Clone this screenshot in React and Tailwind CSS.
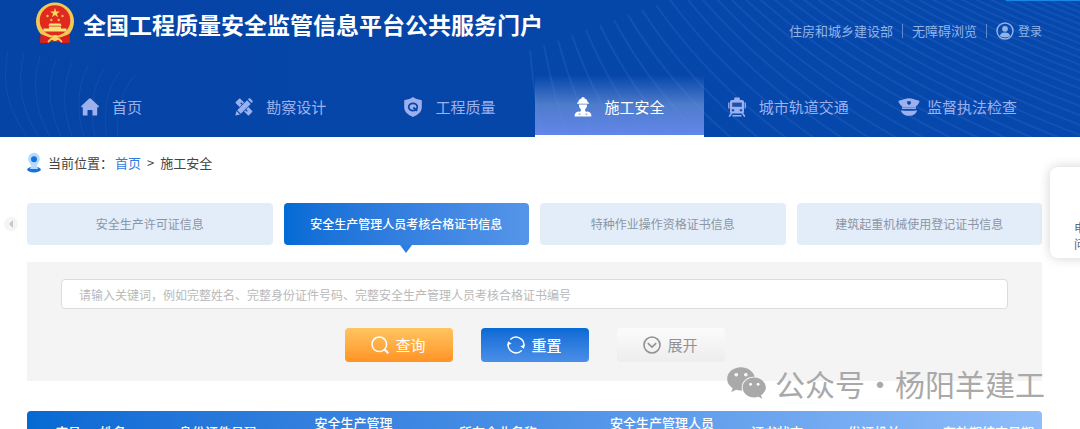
import React, { useState } from 'react';
import { FaWeixin } from 'react-icons/fa';

const navItems = [
  { name: '首页', icon: HomeIcon, gap: 'gap-[13px]' },
  { name: '勘察设计', icon: DesignIcon, gap: 'gap-[13px]' },
  { name: '工程质量', icon: ShieldIcon, gap: 'gap-[13px]' },
  { name: '施工安全', icon: WorkerIcon, gap: 'gap-[13px]' },
  { name: '城市轨道交通', icon: TrainIcon, gap: 'gap-[13px]' },
  { name: '监督执法检查', icon: CapIcon, gap: 'gap-[7px]' },
];

const tabs = [
  '安全生产许可证信息',
  '安全生产管理人员考核合格证书信息',
  '特种作业操作资格证书信息',
  '建筑起重机械使用登记证书信息',
];

const columns = [
  { title: '序号', width: 'w-[57px] pl-[25px]' },
  { title: '姓名', width: 'w-[58px]' },
  { title: '身份证件号码', width: 'w-[152px]' },
  { title: '安全生产管理', more: '人员类型', width: 'w-[119px]' },
  { title: '所在企业名称', width: 'w-[170px]' },
  { title: '安全生产管理人员', more: '考核合格证书编号', width: 'w-[158px]' },
  { title: '证书状态', width: 'w-[72px]' },
  { title: '发证机关', width: 'w-[122px]' },
  { title: '有效期结束日期', width: 'w-[107px]' },
];

function HomeIcon() {
  return (
    <svg viewBox="0 0 18 18" className="w-[18px] h-[18px]" fill="currentColor">
      <path d="M9 .3c.4 0 .7.200 1 .5l7.700 7.300c.5.6.2 1.200-.5 1.200h-1v7.400c0 .6-.3.9-.9.900h-3.800v-5c0-.4-.2-.6-.6-.6H7.100c-.4 0-.6.2-.6.6v5H2.700c-.6 0-.9-.3-.9-.9V9.300h-1C.1 9.300-.2 8.700.3 8.100L8 .8c.3-.3.600-.5 1-.5z" />
    </svg>
  );
}

function DesignIcon() {
  return (
    <svg viewBox="0 0 18 18" className="w-[18px] h-[18px]" fill="currentColor">
      <path d="M.8 4.100 4.100.8c.4-.4.8-.4 1.200 0l3.800 3.800-1.300 1.300-1.600-1.600-.9.900 1.600 1.600L5.600 8.100 4.600 9.100.8 5.300c-.4-.4-.4-.8 0-1.200z" />
      <path d="m9.100 13.400 1.200-1.200 1.600 1.600.9-.9-1.600-1.600 2.200-2.200 3.800 3.800c.4.4.4.8 0 1.200l-3.100 3.100c-.4.4-.8.4-1.200 0z" />
      <path d="m12.100 2.300 3.600 3.600L5.800 15.800l-3.600-3.600zM13 1.400l.8-.8c.5-.5 1-.5 1.500 0l2.100 2.100c.5.5.5 1 0 1.500l-.8.8zM1.500 13l3.500 3.500-4.100 1.100c-.3.100-.6-.2-.5-.5z" />
    </svg>
  );
}

function ShieldIcon() {
  return (
    <svg viewBox="0 0 18 20" className="w-[18px] h-5">
      <path d="M9 0c2.500 1.700 5 2.600 8 2.900.5 0 .8.3.8.8v6.600c0 4.500-3.600 7.500-8.800 9.700C3.800 17.800.2 14.800.2 10.300V3.700c0-.5.3-.8.8-.8C4 2.600 6.500 1.700 9 0z" fill="currentColor" />
      <ellipse cx="9" cy="10" rx="4.300" ry="3.700" fill="none" stroke="#0846a8" strokeWidth="1.800" />
      <path d="m9.300 10.500 3.900 3.200" stroke="#0846a8" strokeWidth="1.800" />
    </svg>
  );
}

function WorkerIcon() {
  return (
    <svg viewBox="0 0 18 20" className="w-[18px] h-5" fill="currentColor">
      <path d="M7.800.3h2.400l.4 1.200C12.600 2.100 13.700 3.700 13.800 5.400h.8c.5 0 .5 1.400 0 1.400H3.400c-.5 0-.5-1.400 0-1.400h.8c.1-1.700 1.200-3.300 3.200-3.900z" />
      <path d="M4.900 7.500h8.200c0 2.200-.7 3.800-2 4.800v1.400l1.200 1.300c.6-.5 1.300-.5 2-.3 2 .6 3.100 2 3.100 4.200 0 .4-.3.700-.7.700H1.300c-.4 0-.7-.3-.7-.7 0-2.200 1.100-3.600 3.100-4.200.7-.2 1.400-.2 2 .3l1.200-1.300v-1.400c-1.300-1-2-2.600-2-4.800z" />
      <path d="M4.600 17.200h2M11.400 17.200h2" stroke="#6d8fdc" strokeWidth="1" />
    </svg>
  );
}

function TrainIcon() {
  return (
    <svg viewBox="0 0 18 20" className="w-[18px] h-5">
      <path d="M7 .5h4c.6 0 .8.3.8.8V3H14c1.200 0 2 .8 2 2v9.500c0 1.200-.8 2-2 2H4c-1.200 0-2-.8-2-2V5c0-1.200.8-2 2-2h2.200V1.300c0-.5.2-.8.8-.8z" fill="currentColor" />
      <path d="M.8 5.500v6M17.200 5.500v6" stroke="currentColor" strokeWidth="1.300" />
      <path d="M4.200 5.600h9.600v4.200H4.200z" fill="#1d4fae" />
      <circle cx="5" cy="13.300" r="1.200" fill="#1d4fae" />
      <circle cx="13" cy="13.300" r="1.200" fill="#1d4fae" />
      <path d="m3.600 16-2.400 3.700M14.400 16l2.400 3.700M4.500 18.800h9" stroke="currentColor" strokeWidth="1.500" />
    </svg>
  );
}

function CapIcon() {
  return (
    <svg viewBox="0 0 22 18" className="w-[22px] h-[18px]" fill="currentColor">
      <path d="M11 .2c3 0 5 1.300 9.500 2.200.9.200 1.200.9.900 1.600-.8 1.900-1.900 3.200-3.500 4.500v2.600H4.100V8.500C2.500 7.200 1.400 5.900.6 4c-.3-.7 0-1.400.9-1.600C6 1.500 8 .2 11 .2z" />
      <path d="M3 12.200c4.600.7 11.400.7 16 0-.6 3.400-3.600 5.600-8 5.600s-7.400-2.200-8-5.600z" />
      <path d="M9.200 3.300h3.600v2.500L11 7 9.200 5.800z" fill="#0846a8" />
      <path d="M4.100 9.200c4 .7 9.800.7 13.800 0" fill="none" stroke="#5878c8" strokeWidth=".7" />
    </svg>
  );
}

function Emblem() {
  return (
    <svg viewBox="0 0 40 42" className="w-10 h-[42px]" role="img" aria-label="国徽">
      <path d="M6 29h28l1 11.500c-5 1.300-9 .3-11-1h-8c-2 1.300-6 2.300-11 1z" fill="#d8201c" />
      <circle cx="20" cy="19.500" r="19" fill="#f0ca55" />
      <circle cx="20" cy="18.500" r="15.300" fill="#e02a20" />
      <path d="m20 6 1.200 3.500h3.700l-3 2.200 1.200 3.500-3.100-2.200-3.100 2.200 1.200-3.500-3-2.200h3.700z" fill="#f8d85c" />
      <g fill="#f3bd4a">
        <circle cx="12.500" cy="14" r="1.200" />
        <circle cx="27.500" cy="14" r="1.200" />
        <circle cx="16.300" cy="18" r="1.200" />
        <circle cx="23.700" cy="18" r="1.200" />
      </g>
      <path d="M14.500 21.500h11l1.200 2.300H13.300zM14 24.500h12v2h5.500v3h-23v-3H14z" fill="#fbe27a" />
      <path d="M6 32c6 4 22 4 28 0l1 8.500c-5 1.300-9 .3-11-1h-8c-2 1.300-6 2.300-11 1z" fill="#d8201c" />
      <path d="M9 31.500c5 4.500 17 4.500 22 0M13 40l3-3h8l3 3" fill="none" stroke="#f0ca55" strokeWidth="1.800" />
      <circle cx="20" cy="36" r="3" fill="#f5d565" />
    </svg>
  );
}

// faint contour lines over the blue banner
function Waves() {
  const right = Array.from({ length: 44 }, (_, i) => {
    const x = 530 + i * 14;
    const y = Math.max(-6, 50 - i * 5);
    const dx = 14 + i * 15;
    const dy = 150 - y;
    return `M${x} ${y} Q${x + dx * 0.4} ${y + dy * 0.58} ${x + dx} ${y + dy}`;
  });
  const left = Array.from({ length: 9 }, (_, i) => `M${8 + i * 16} ${50 + i * 3} C${i * 15} 90 ${12 + i * 13} 115 ${30 + i * 11} 140`);
  return (
    <svg viewBox="0 0 1080 136" preserveAspectRatio="none" className="absolute inset-0 w-full h-full" fill="none" stroke="#5b93e8">
      {right.map((d) => (
        <path key={d} d={d} strokeWidth="2" strokeOpacity="0.14" />
      ))}
      {left.map((d) => (
        <path key={d} d={d} strokeOpacity="0.13" />
      ))}
    </svg>
  );
}

const App = () => {
  const [activeNav, setActiveNav] = useState('施工安全');
  const [activeTab, setActiveTab] = useState(tabs[1]);
  const [keyword, setKeyword] = useState('');

  return (
    <div className="relative h-screen overflow-hidden bg-white font-['Noto_Sans_CJK_SC',sans-serif] text-[#444]">
      <header className="relative bg-linear-to-r from-[#0544a5] to-[#0648ad] pl-[27px] pr-[38px]">
        <Waves />
        <div className="absolute top-0 right-0 h-px w-[74px] bg-[#1687ea]" />
        <div className="relative flex h-[75px] items-start justify-between">
          <div className="flex items-start gap-2 pl-2">
            <span className="pt-[2px]">
              <Emblem />
            </span>
            <h1 className="text-[23px] leading-[48px] font-bold text-white">全国工程质量安全监管信息平台公共服务门户</h1>
          </div>
          <div className="flex items-center pt-[21px] text-[13px] leading-5 text-[#91b3e6]">
            <a href="#mohurd">住房和城乡建设部</a>
            <span className="mx-[9px] h-[14px] w-px bg-[#5d88cb]" />
            <a href="#accessible">无障碍浏览</a>
            <span className="mx-[9px] h-[14px] w-px bg-[#5d88cb]" />
            <a href="#login" className="flex items-center gap-1 text-xs leading-5">
              <svg viewBox="0 0 18 18" className="w-[18px] h-[18px]">
                <circle cx="9" cy="9" r="8" fill="none" stroke="currentColor" strokeWidth="1.500" />
                <circle cx="9" cy="6.800" r="2.900" fill="currentColor" />
                <path d="M3.800 13.800c.6-2.300 2.300-3.400 5.200-3.400s4.600 1.100 5.200 3.400C11.500 16 6.500 16 3.800 13.800z" fill="currentColor" />
              </svg>
              登录
            </a>
          </div>
        </div>
        <nav className="relative grid grid-cols-6">
          {navItems.map((item) => (
            <a
              key={item.name}
              href={`#${item.name}`}
              onClick={() => setActiveNav(item.name)}
              className={`flex h-[62px] items-center justify-center border-b-2 pt-1 text-[15px] ${item.gap} ${
                activeNav === item.name
                  ? 'border-white bg-linear-to-b from-[#6d93da]/0 via-[#6d93da]/70 to-[#6486ea] text-white'
                  : 'border-transparent text-[#9db0ee]'
              }`}
            >
              <item.icon />
              {item.name}
            </a>
          ))}
        </nav>
      </header>

      <main className="pl-[27px] pr-[38px]">
        <div className="flex h-[66px] items-center pb-[14px] text-[13px]">
          <svg viewBox="0 0 14 20" className="mr-[7px] w-[14px] h-5">
            <ellipse cx="7" cy="16.500" rx="6.800" ry="3" fill="#1673d8" />
            <path d="M7 0c3.400 0 5.800 2.600 5.800 5.900 0 3.200-2.300 4.700-2.800 6.900L11 16H3l1-3.200C3.500 10.600 1.200 9.100 1.200 5.900 1.200 2.600 3.600 0 7 0z" fill="#b4daff" />
            <circle cx="7" cy="6.300" r="3" fill="#1673d8" />
          </svg>
          <span>当前位置：</span>
          <a href="#home" className="ml-[2px] text-[#337bd8]">首页</a>
          <span className="mx-[6px]">&gt;</span>
          <span>施工安全</span>
        </div>

        <div className="grid grid-cols-4 gap-[11px]">
          {tabs.map((tab) => (
            <button
              key={tab}
              type="button"
              onClick={() => setActiveTab(tab)}
              className={`relative h-[42px] rounded text-xs ${
                activeTab === tab
                  ? 'bg-linear-to-r from-[#026bd5] to-[#5595e9] font-medium text-white'
                  : 'bg-[#e3edfa] text-[#8c95a3]'
              }`}
            >
              {tab}
              {activeTab === tab && (
                <span className="absolute top-full left-1/2 -translate-x-1/2 border-x-[6px] border-t-8 border-x-transparent border-t-[#2b80de]" />
              )}
            </button>
          ))}
        </div>

        <form className="relative mt-[17px] bg-[#f4f4f4] px-[34px] pt-[17px] pb-[19px]" onSubmit={(e) => e.preventDefault()}>
          <input
            type="text"
            aria-label="关键词"
            value={keyword}
            onChange={(e) => setKeyword(e.target.value)}
            placeholder="请输入关键词，例如完整姓名、完整身份证件号码、完整安全生产管理人员考核合格证书编号"
            className="block h-[30px] w-full rounded border border-[#dcdcdc] bg-white px-[17px] text-xs placeholder:text-[#b9b9b9]"
          />
          <div className="mt-[19px] flex justify-center gap-7 text-[15px]">
            <button type="submit" className="flex h-[34px] w-[108px] items-center justify-center gap-[6px] rounded bg-linear-to-b from-[#ffc55e] to-[#ff9321] text-white">
              <svg viewBox="0 0 18 18" className="w-[18px] h-[18px]" fill="none" stroke="currentColor" strokeWidth="1.500">
                <circle cx="8.300" cy="8.300" r="7.300" />
                <path d="m13.300 13.300 4 4" strokeWidth="2" />
              </svg>
              查询
            </button>
            <button type="reset" onClick={() => setKeyword('')} className="flex h-[34px] w-[108px] items-center justify-center gap-[6px] rounded bg-linear-to-b from-[#0569d4] to-[#4a8fe8] font-medium text-white">
              <svg viewBox="0 0 18 18" className="w-[18px] h-[18px]" fill="none" stroke="currentColor" strokeWidth="1.500">
                <path d="M3.300 3.500A8 8 0 0 1 16.900 9.800M14.700 14.500A8 8 0 0 1 1.100 8.200" />
                <path d="m18 8.600-1.100 4.200-3.500-2.600zM0 9.400l1.100-4.200 3.500 2.600z" fill="currentColor" stroke="none" />
              </svg>
              重置
            </button>
            <button type="button" className="flex h-[34px] w-[108px] items-center justify-center gap-[6px] rounded bg-linear-to-b from-[#fbfbfb] to-[#ededed] text-[#929292]">
              <svg viewBox="0 0 18 18" className="w-[18px] h-[18px]" fill="none" stroke="currentColor" strokeWidth="1.600">
                <circle cx="9" cy="9" r="8" />
                <path d="m4.800 7.200 4.200 4 4.200-4" />
              </svg>
              展开
            </button>
          </div>
          <div className="absolute -right-[3px] -bottom-[24px] flex items-center gap-2 text-3xl leading-[44px] whitespace-nowrap text-[#a9a9a9]">
            <FaWeixin className="w-[41px] h-9" />
            <span>公众号·杨阳羊建工</span>
          </div>
        </form>

        <table className="mt-[30px] w-full table-fixed overflow-hidden rounded bg-linear-to-r from-[#0569d3] via-[#4a90e6] to-[#90bdf9] text-[13px] leading-[18px] text-white">
          <thead>
            <tr>
              {columns.map((col) => (
                <th key={col.title} className={`py-[3px] font-medium whitespace-nowrap ${col.width}`}>
                  {col.title}
                  {col.more && <span className="block">{col.more}</span>}
                </th>
              ))}
            </tr>
          </thead>
        </table>
      </main>

      <button type="button" aria-label="向左" className="absolute top-[217px] left-1 flex h-[14px] w-[14px] items-center justify-center rounded-full bg-[#f5f5f5]">
        <span className="border-y-4 border-r-4 border-y-transparent border-r-[#c8c8c8]" />
      </button>
      <aside className="absolute top-[167px] -right-[30px] flex h-[91px] w-[60px] flex-col justify-end rounded-lg bg-white pb-[6px] pl-6 text-xs leading-4 text-[#5c6788] shadow-[0_0_12px_rgba(0,0,0,0.18)]">
        <span>电话</span>
        <span>问题</span>
      </aside>
    </div>
  );
};

export default App;
